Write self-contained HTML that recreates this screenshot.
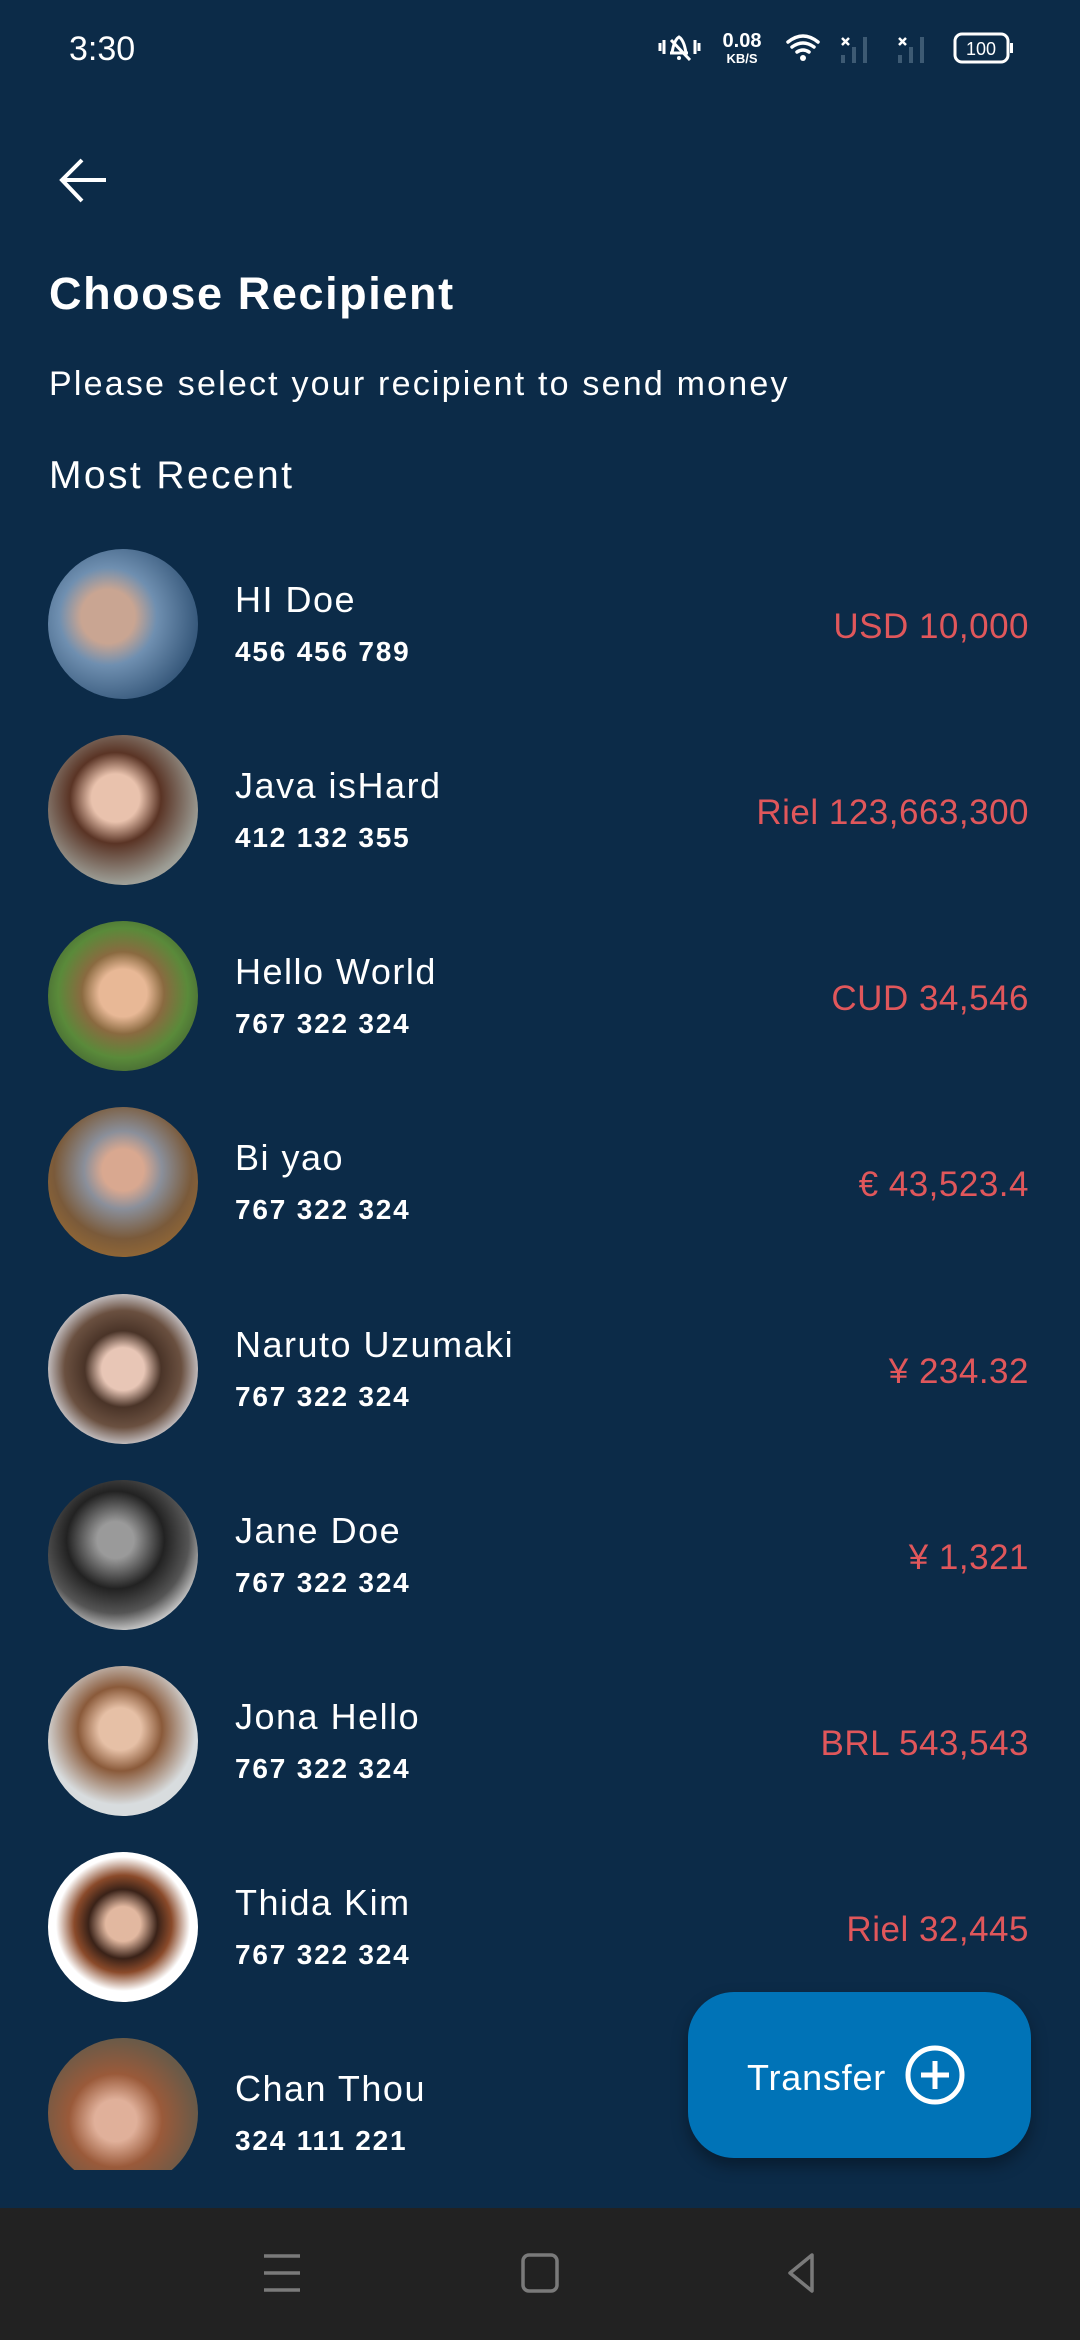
<!DOCTYPE html>
<html><head><meta charset="utf-8"><style>
*{margin:0;padding:0;box-sizing:border-box}
body{width:1080px;height:2340px;background:#0c2b48;font-family:"Liberation Sans",sans-serif;color:#fff;position:relative;overflow:hidden}
.abs{position:absolute}
.av{position:absolute;left:48px;width:150px;height:150px;border-radius:50%;overflow:hidden}
.nm{position:absolute;left:235px;font-size:36px;line-height:1;white-space:nowrap;letter-spacing:1.5px}
.nu{position:absolute;left:235px;font-size:28px;font-weight:bold;line-height:1;white-space:nowrap;letter-spacing:1.8px}
.am{position:absolute;right:51px;font-size:35px;line-height:1;color:#e0575b;white-space:nowrap;letter-spacing:0.5px}
</style></head><body>
<div class="abs" style="left:69px;top:30px;font-size:34px">3:30</div>
<svg class="abs" style="left:655px;top:30px" width="370" height="40" viewBox="655 30 370 40">
 <g stroke="#fff" stroke-width="3" fill="none">
  <path d="M670 53 L688 53 M672 53 Q674 40 679 37 Q684 40 686 53 M671 40 L690 60"/>
  <path d="M660 43v8 M664 40v14 M695 40v14 M699 43v8"/>
 </g>
 <circle cx="679" cy="58" r="2" fill="#fff"/>
 <text x="742" y="47" font-size="20" font-weight="bold" fill="#fff" text-anchor="middle" font-family="Liberation Sans">0.08</text>
 <text x="742" y="63" font-size="13" font-weight="bold" fill="#fff" text-anchor="middle" font-family="Liberation Sans">KB/S</text>
 <g stroke="#fff" stroke-width="3.5" fill="none" stroke-linecap="round">
  <path d="M788 42 Q803 30 818 42 M792 47 Q803 39 814 47 M797 52 Q803 48 809 52"/>
 </g>
 <circle cx="803" cy="58" r="3" fill="#fff"/>
 <g fill="#3d5a73"><rect x="841" y="55" width="4" height="8"/><rect x="852" y="47" width="4" height="16"/><rect x="863" y="37" width="4" height="26"/>
 <rect x="898" y="55" width="4" height="8"/><rect x="909" y="47" width="4" height="16"/><rect x="920" y="37" width="4" height="26"/></g>
 <g stroke="#fff" stroke-width="2.5"><path d="M842 38l7 7M849 38l-7 7M899 38l7 7M906 38l-7 7"/></g>
 <rect x="955" y="34" width="53" height="28" rx="7" stroke="#fff" stroke-width="3" fill="none"/>
 <rect x="1010" y="43" width="3" height="10" fill="#fff"/>
 <text x="981" y="55" font-size="18" fill="#fff" text-anchor="middle" font-family="Liberation Sans">100</text>
</svg>
<svg class="abs" style="left:58px;top:156px" width="52" height="50" viewBox="0 0 52 50"><path d="M48 24H5 M24 4 L4 24 L24 45" stroke="#fff" stroke-width="4" fill="none"/></svg>
<div class="abs" style="left:49px;top:268px;font-size:45px;font-weight:bold;letter-spacing:1.6px">Choose Recipient</div>
<div class="abs" style="left:49px;top:365px;font-size:34px;letter-spacing:2.2px">Please select your recipient to send money</div>
<div class="abs" style="left:49px;top:454px;font-size:39px;letter-spacing:2.4px">Most Recent</div>

<div class="av" style="top:549px;background:radial-gradient(circle at 40% 45%,#c9a592 0 22%,#6f8fb0 40%,#2d4f72 80%)"></div>
<div class="nm" style="top:582px">HI Doe</div><div class="nu" style="top:638px">456 456 789</div><div class="am" style="top:609px">USD 10,000</div>

<div class="av" style="top:735px;background:radial-gradient(circle at 45% 42%,#e9c2ad 0 20%,#5a3425 38%,#9a9a92 70%,#cfcfc8)"></div>
<div class="nm" style="top:768px">Java isHard</div><div class="nu" style="top:824px">412 132 355</div><div class="am" style="top:795px">Riel 123,663,300</div>

<div class="av" style="top:921px;background:radial-gradient(circle at 50% 48%,#e8b896 0 22%,#8a6a40 38%,#5a8a3a 60%,#2c3c2a)"></div>
<div class="nm" style="top:954px">Hello World</div><div class="nu" style="top:1010px">767 322 324</div><div class="am" style="top:981px">CUD 34,546</div>

<div class="av" style="top:1107px;background:radial-gradient(circle at 50% 42%,#d9a890 0 18%,#8a8f9a 34%,#7a5a3a 60%,#b07830)"></div>
<div class="nm" style="top:1140px">Bi yao</div><div class="nu" style="top:1196px">767 322 324</div><div class="am" style="top:1167px">€ 43,523.4</div>

<div class="av" style="top:1294px;background:radial-gradient(circle at 50% 50%,#e8c6b6 0 20%,#4a3428 36%,#6a5040 55%,#d6d6dc 75%)"></div>
<div class="nm" style="top:1327px">Naruto Uzumaki</div><div class="nu" style="top:1383px">767 322 324</div><div class="am" style="top:1354px">¥ 234.32</div>

<div class="av" style="top:1480px;background:radial-gradient(circle at 45% 40%,#9a9a9a 0 15%,#222 40%,#555 60%,#eee 80%)"></div>
<div class="nm" style="top:1513px">Jane Doe</div><div class="nu" style="top:1569px">767 322 324</div><div class="am" style="top:1540px">¥ 1,321</div>

<div class="av" style="top:1666px;background:radial-gradient(circle at 48% 42%,#e6c0a6 0 18%,#8a5a3a 36%,#d8dcde 65%)"></div>
<div class="nm" style="top:1699px">Jona Hello</div><div class="nu" style="top:1755px">767 322 324</div><div class="am" style="top:1726px">BRL 543,543</div>

<div class="av" style="top:1852px;background:radial-gradient(circle at 50% 48%,#e2b8a0 0 16%,#3a2218 32%,#8a4a2a 45%,#fff 62%)"></div>
<div class="nm" style="top:1885px">Thida Kim</div><div class="nu" style="top:1941px">767 322 324</div><div class="am" style="top:1912px">Riel 32,445</div>

<div class="abs" style="left:48px;top:2038px;width:150px;height:132px;overflow:hidden"><div style="width:150px;height:150px;border-radius:50%;background:radial-gradient(circle at 45% 55%,#e0b09a 0 18%,#9a5a3a 40%,#6a5a48 70%)"></div></div>
<div class="nm" style="top:2071px">Chan Thou</div><div class="nu" style="top:2127px">324 111 221</div>

<div class="abs" style="left:688px;top:1992px;width:343px;height:166px;border-radius:46px;background:#0073b7;box-shadow:0 8px 16px rgba(0,0,0,.35)"></div>
<div class="abs" style="left:747px;top:2057px;font-size:36px;letter-spacing:0.8px">Transfer</div>
<svg class="abs" style="left:902px;top:2042px" width="66" height="66" viewBox="0 0 66 66"><circle cx="33" cy="33" r="27" stroke="#fff" stroke-width="5" fill="none"/><path d="M33 19v28M19 33h28" stroke="#fff" stroke-width="5"/></svg>

<div class="abs" style="left:0;top:2208px;width:1080px;height:132px;background:#222"></div>
<svg class="abs" style="left:0;top:2208px" width="1080" height="132" viewBox="0 2208 1080 132"><g stroke="#7a7a7a" stroke-width="3.5" fill="none"><path d="M264 2256h36M264 2273h36M264 2290h36"/><rect x="523" y="2255" width="34" height="36" rx="6"/><path d="M812 2255 L790 2273 L812 2291 Z" stroke-linejoin="round"/></g></svg>
</body></html>
